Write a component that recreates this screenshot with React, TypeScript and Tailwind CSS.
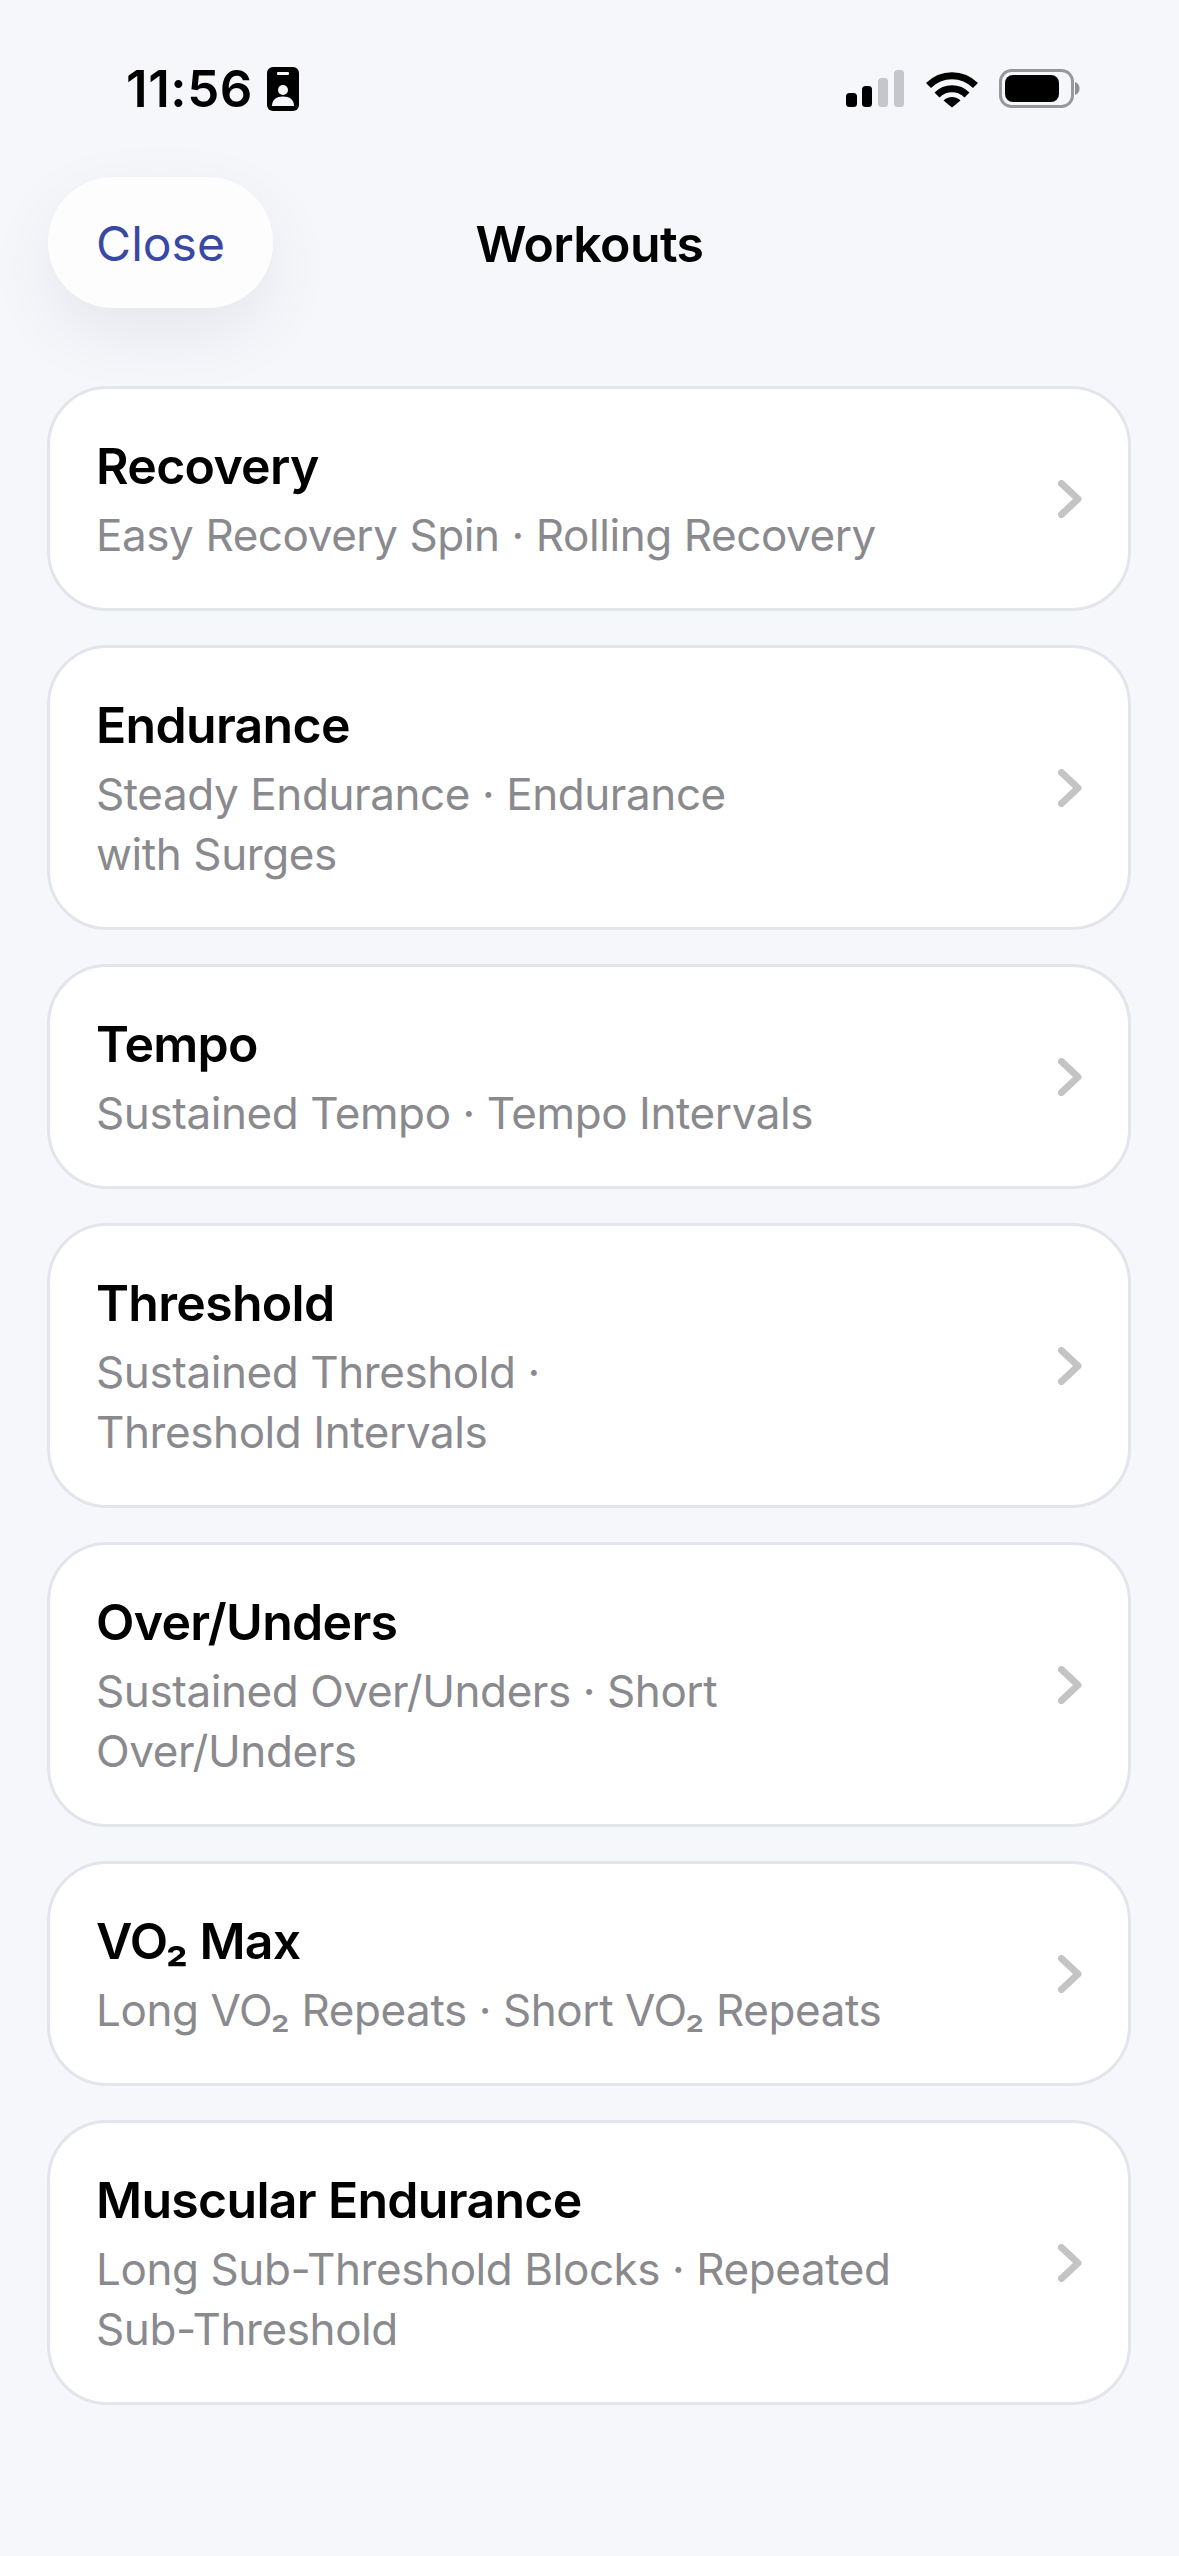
const items: { title: string; lines: string[] }[] = [
  { title: "Recovery", lines: ["Easy Recovery Spin · Rolling Recovery"] },
  { title: "Endurance", lines: ["Steady Endurance · Endurance", "with Surges"] },
  { title: "Tempo", lines: ["Sustained Tempo · Tempo Intervals"] },
  { title: "Threshold", lines: ["Sustained Threshold ·", "Threshold Intervals"] },
  { title: "Over/Unders", lines: ["Sustained Over/Unders · Short", "Over/Unders"] },
  { title: "VO₂ Max", lines: ["Long VO₂ Repeats · Short VO₂ Repeats"] },
  { title: "Muscular Endurance", lines: ["Long Sub-Threshold Blocks · Repeated", "Sub-Threshold"] },
];

function StatusBar() {
  return (
    <div className="h-[177px] flex items-center justify-between pl-[126px] pr-[98px]">
      <div className="flex items-center gap-[14px]">
        <span className="text-[51px] leading-[60px] font-semibold text-black tracking-[0.6px]">11:56</span>
        <svg width="32" height="44" viewBox="0 0 32 44">
          <rect x="0" y="0" width="32" height="44" rx="6" fill="#000" />
          <rect x="10" y="5" width="12" height="3" rx="1" fill="#f6f7fb" />
          <circle cx="16" cy="23" r="5" fill="#f6f7fb" />
          <path d="M5 39c0-6.500 4.500-9.500 11-9.500s11 3 11 9.500z" fill="#f6f7fb" />
        </svg>
      </div>
      <div className="flex items-center">
        <svg width="235" height="40" viewBox="0 0 235 40">
          <rect x="0" y="24" width="11" height="14" rx="3.500" fill="#000" />
          <rect x="16" y="17" width="10" height="21" rx="3.500" fill="#000" />
          <rect x="32" y="9" width="10" height="29" rx="3.500" fill="#c4c6cb" />
          <rect x="48" y="1" width="10" height="37" rx="3.500" fill="#c4c6cb" />
          <g fill="none" stroke="#000" strokeWidth="7">
            <path d="M82.500 16.500a33 33 0 0 1 47 0" />
            <path d="M91 26a21 21 0 0 1 30 0" />
          </g>
          <path d="M97.500 31.500a12 12 0 0 1 17 0l-8.500 7z" fill="#000" />
          <rect x="154.500" y="1.500" width="72" height="36" rx="11" fill="none" stroke="#97989c" strokeWidth="3" />
          <rect x="159" y="6" width="54" height="27" rx="8" fill="#000" />
          <path d="M229 13c3 1 4.500 3.500 4.500 6.500s-1.500 5.500-4.500 6.500z" fill="#8e8f93" />
        </svg>
      </div>
    </div>
  );
}

function Chevron() {
  return (
    <svg width="24" height="38" viewBox="0 0 24 38" className="shrink-0 mb-[3px]">
      <path d="M3.500 3.500 L20 19 L3.500 34.500" fill="none" stroke="#c4c4c6" strokeWidth="7" strokeLinecap="round" strokeLinejoin="round" />
    </svg>
  );
}

export default function App() {
  return (
    <div
      className="w-[1179px] h-[2556px] overflow-hidden bg-[#f6f7fb] text-black"
      style={{ fontFamily: "Inter, 'Liberation Sans', sans-serif" }}
    >
      <StatusBar />
      <div className="relative z-10 grid grid-cols-[1fr_auto_1fr] items-center h-[131px] pl-[48px] pr-[48px]">
        <button className="justify-self-start w-[225px] h-[131px] rounded-[65px] pt-[3px] bg-[#fdfdfe] shadow-[0_25px_70px_rgba(20,20,50,0.07)] text-[48px] text-[#3949a3] flex items-center justify-center">
          Close
        </button>
        <div className="text-[50px] font-semibold leading-[60px] pt-[2px] tracking-[-0.6px]">Workouts</div>
        <div />
      </div>
      <div className="mt-[78px] pl-[47px] pr-[48px] flex flex-col gap-[34px]">
        {items.map((it) => (
          <div
            key={it.title}
            className="flex items-center justify-between rounded-[60px] border-[3px] border-[#e3e5ec] bg-white pl-[46px] pr-[46px] pt-[47px] pb-[43px]"
          >
            <div className="flex flex-col gap-[9px] min-w-0">
              <div className="text-[50px] font-semibold leading-[60px] text-black tracking-[-0.7px]">{it.title}</div>
              <div className="text-[44px] leading-[60px] text-[#8a8a8e] tracking-[-0.42px]">
                {it.lines.map((l) => (
                  <div key={l} className="whitespace-nowrap">{l}</div>
                ))}
              </div>
            </div>
            <Chevron />
          </div>
        ))}
      </div>
    </div>
  );
}
